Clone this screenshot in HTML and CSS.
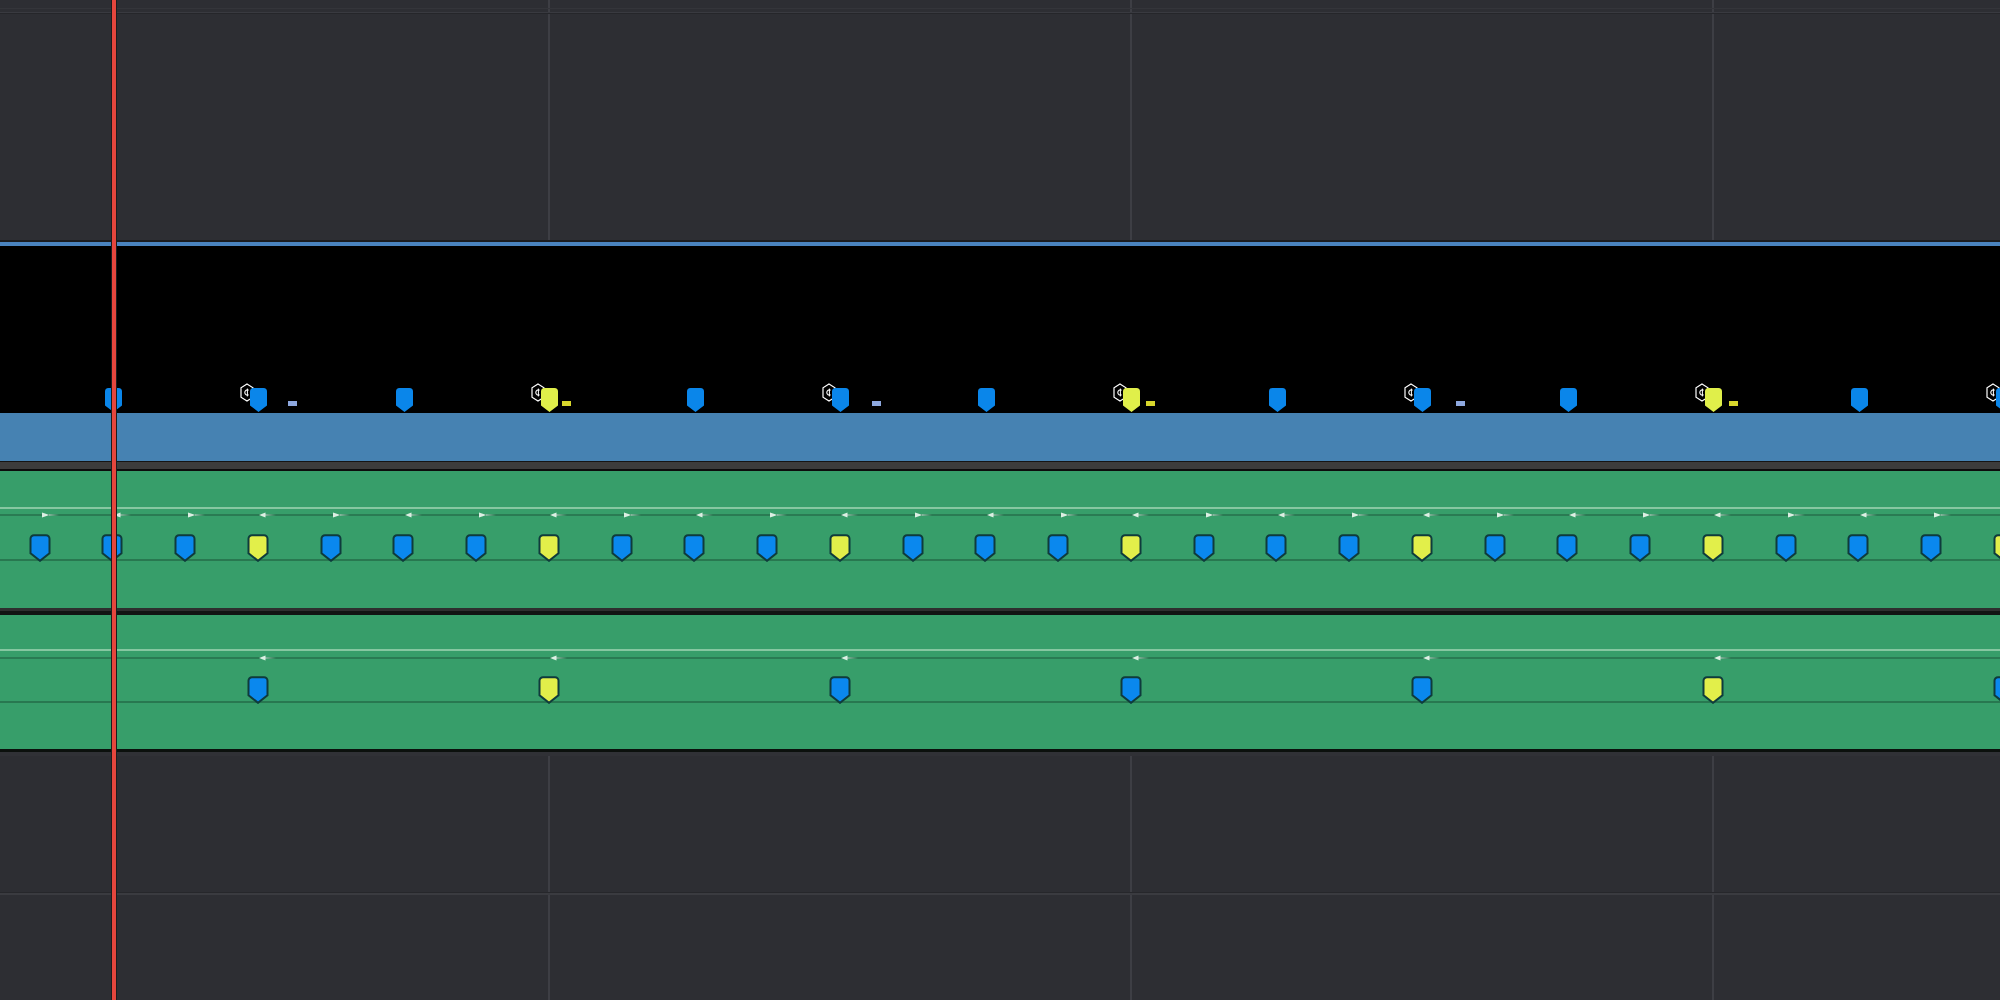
FILE: index.html
```html
<!DOCTYPE html>
<html>
<head>
<meta charset="utf-8">
<title>Timeline</title>
<link rel="stylesheet" href="styles.css">
</head>
<body>
<svg class="defs" width="0" height="0">
  <defs>
    <linearGradient id="fade" x1="0" x2="1" y1="0" y2="0">
      <stop offset="0" stop-color="#dcefe3" stop-opacity="0.85"/>
      <stop offset="1" stop-color="#dcefe3" stop-opacity="0"/>
    </linearGradient>
    <symbol id="pin-blue" viewBox="0 0 22 28"><path d="M5 1.2H17A3.5 3.5 0 0 1 20.5 4.7V19.2L11 26.8 1.5 19.2V4.7A3.5 3.5 0 0 1 5 1.2Z" fill="#0a88ee" stroke="#0f3b3c" stroke-width="2"/></symbol>
    <symbol id="pin-yellow" viewBox="0 0 22 28"><path d="M5 1.2H17A3.5 3.5 0 0 1 20.5 4.7V19.2L11 26.8 1.5 19.2V4.7A3.5 3.5 0 0 1 5 1.2Z" fill="#e2ef4a" stroke="#0f3b3c" stroke-width="2"/></symbol>
    <symbol id="tag-blue" viewBox="0 0 17 24"><path d="M3.5 0H13.5A3.5 3.5 0 0 1 17 3.5V17.5L8.5 24 0 17.5V3.5A3.5 3.5 0 0 1 3.5 0Z" fill="#0a86ea"/></symbol>
    <symbol id="tag-yellow" viewBox="0 0 17 24"><path d="M3.5 0H13.5A3.5 3.5 0 0 1 17 3.5V17.5L8.5 24 0 17.5V3.5A3.5 3.5 0 0 1 3.5 0Z" fill="#e0ef4a"/></symbol>
    <symbol id="hex" viewBox="0 0 14 19"><path d="M7 1L13 4.8V14.2L7 18 1 14.2V4.8Z" fill="none" stroke="#ffffff" stroke-width="1.2"/><path d="M8.6 7.2A2.6 2.6 0 1 0 8.6 11.8" fill="none" stroke="#ffffff" stroke-width="1.1"/><path d="M7.4 5.6V13.4" stroke="#ffffff" stroke-width="1"/></symbol>
    <symbol id="arr-r" viewBox="0 0 17 6"><polygon points="0,0.6 7.5,3 0,5.4" fill="#dcefe3"/><rect x="7" y="2.4" width="10" height="1.2" fill="url(#fade)"/></symbol>
    <symbol id="arr-l" viewBox="0 0 17 6"><polygon points="0,3 6.5,0.6 6.5,5.4" fill="#dcefe3"/><rect x="6" y="2.4" width="11" height="1.2" fill="url(#fade)"/></symbol>
  </defs>
</svg>

<div class="timeline">
  <div class="ruler"></div>
  <div class="lane-rule"></div>

  <div class="sub-lane">
    <div class="tag-row">
      <svg class="tag" style="left:112.25px"><use href="#tag-blue"/></svg>
      <svg class="hex" style="left:257.75px"><use href="#hex"/></svg>
      <svg class="tag" style="left:257.75px"><use href="#tag-blue"/></svg>
      <span class="chip chip-blue" style="left:288px"></span>
      <svg class="tag" style="left:403.25px"><use href="#tag-blue"/></svg>
      <svg class="hex" style="left:548.75px"><use href="#hex"/></svg>
      <svg class="tag" style="left:548.75px"><use href="#tag-yellow"/></svg>
      <span class="chip chip-yellow" style="left:562px"></span>
      <svg class="tag" style="left:694.25px"><use href="#tag-blue"/></svg>
      <svg class="hex" style="left:839.75px"><use href="#hex"/></svg>
      <svg class="tag" style="left:839.75px"><use href="#tag-blue"/></svg>
      <span class="chip chip-blue" style="left:872px"></span>
      <svg class="tag" style="left:985.25px"><use href="#tag-blue"/></svg>
      <svg class="hex" style="left:1130.75px"><use href="#hex"/></svg>
      <svg class="tag" style="left:1130.75px"><use href="#tag-yellow"/></svg>
      <span class="chip chip-yellow" style="left:1146px"></span>
      <svg class="tag" style="left:1276.25px"><use href="#tag-blue"/></svg>
      <svg class="hex" style="left:1421.75px"><use href="#hex"/></svg>
      <svg class="tag" style="left:1421.75px"><use href="#tag-blue"/></svg>
      <span class="chip chip-blue" style="left:1456px"></span>
      <svg class="tag" style="left:1567.25px"><use href="#tag-blue"/></svg>
      <svg class="hex" style="left:1712.75px"><use href="#hex"/></svg>
      <svg class="tag" style="left:1712.75px"><use href="#tag-yellow"/></svg>
      <span class="chip chip-yellow" style="left:1729px"></span>
      <svg class="tag" style="left:1858.25px"><use href="#tag-blue"/></svg>
      <svg class="hex" style="left:2003.75px"><use href="#hex"/></svg>
      <svg class="tag" style="left:2003.75px"><use href="#tag-blue"/></svg>
    </div>
  </div>

  <div class="blue-bar"></div>
  <div class="sep sep-a"></div>

  <div class="track t1">
    <div class="guide"></div>
    <div class="keyrow">
      <svg class="arr arr-right" style="left:39.5px"><use href="#arr-r"/></svg>
      <svg class="arr arr-left" style="left:112.25px"><use href="#arr-l"/></svg>
      <svg class="arr arr-right" style="left:185px"><use href="#arr-r"/></svg>
      <svg class="arr arr-left" style="left:257.75px"><use href="#arr-l"/></svg>
      <svg class="arr arr-right" style="left:330.5px"><use href="#arr-r"/></svg>
      <svg class="arr arr-left" style="left:403.25px"><use href="#arr-l"/></svg>
      <svg class="arr arr-right" style="left:476px"><use href="#arr-r"/></svg>
      <svg class="arr arr-left" style="left:548.75px"><use href="#arr-l"/></svg>
      <svg class="arr arr-right" style="left:621.5px"><use href="#arr-r"/></svg>
      <svg class="arr arr-left" style="left:694.25px"><use href="#arr-l"/></svg>
      <svg class="arr arr-right" style="left:767px"><use href="#arr-r"/></svg>
      <svg class="arr arr-left" style="left:839.75px"><use href="#arr-l"/></svg>
      <svg class="arr arr-right" style="left:912.5px"><use href="#arr-r"/></svg>
      <svg class="arr arr-left" style="left:985.25px"><use href="#arr-l"/></svg>
      <svg class="arr arr-right" style="left:1058px"><use href="#arr-r"/></svg>
      <svg class="arr arr-left" style="left:1130.75px"><use href="#arr-l"/></svg>
      <svg class="arr arr-right" style="left:1203.5px"><use href="#arr-r"/></svg>
      <svg class="arr arr-left" style="left:1276.25px"><use href="#arr-l"/></svg>
      <svg class="arr arr-right" style="left:1349px"><use href="#arr-r"/></svg>
      <svg class="arr arr-left" style="left:1421.75px"><use href="#arr-l"/></svg>
      <svg class="arr arr-right" style="left:1494.5px"><use href="#arr-r"/></svg>
      <svg class="arr arr-left" style="left:1567.25px"><use href="#arr-l"/></svg>
      <svg class="arr arr-right" style="left:1640px"><use href="#arr-r"/></svg>
      <svg class="arr arr-left" style="left:1712.75px"><use href="#arr-l"/></svg>
      <svg class="arr arr-right" style="left:1785.5px"><use href="#arr-r"/></svg>
      <svg class="arr arr-left" style="left:1858.25px"><use href="#arr-l"/></svg>
      <svg class="arr arr-right" style="left:1931px"><use href="#arr-r"/></svg>
      <svg class="arr arr-left" style="left:2003.75px"><use href="#arr-l"/></svg>
    </div>
    <div class="markrow">
      <svg class="pin" style="left:39.5px"><use href="#pin-blue"/></svg>
      <svg class="pin" style="left:112.25px"><use href="#pin-blue"/></svg>
      <svg class="pin" style="left:185px"><use href="#pin-blue"/></svg>
      <svg class="pin" style="left:257.75px"><use href="#pin-yellow"/></svg>
      <svg class="pin" style="left:330.5px"><use href="#pin-blue"/></svg>
      <svg class="pin" style="left:403.25px"><use href="#pin-blue"/></svg>
      <svg class="pin" style="left:476px"><use href="#pin-blue"/></svg>
      <svg class="pin" style="left:548.75px"><use href="#pin-yellow"/></svg>
      <svg class="pin" style="left:621.5px"><use href="#pin-blue"/></svg>
      <svg class="pin" style="left:694.25px"><use href="#pin-blue"/></svg>
      <svg class="pin" style="left:767px"><use href="#pin-blue"/></svg>
      <svg class="pin" style="left:839.75px"><use href="#pin-yellow"/></svg>
      <svg class="pin" style="left:912.5px"><use href="#pin-blue"/></svg>
      <svg class="pin" style="left:985.25px"><use href="#pin-blue"/></svg>
      <svg class="pin" style="left:1058px"><use href="#pin-blue"/></svg>
      <svg class="pin" style="left:1130.75px"><use href="#pin-yellow"/></svg>
      <svg class="pin" style="left:1203.5px"><use href="#pin-blue"/></svg>
      <svg class="pin" style="left:1276.25px"><use href="#pin-blue"/></svg>
      <svg class="pin" style="left:1349px"><use href="#pin-blue"/></svg>
      <svg class="pin" style="left:1421.75px"><use href="#pin-yellow"/></svg>
      <svg class="pin" style="left:1494.5px"><use href="#pin-blue"/></svg>
      <svg class="pin" style="left:1567.25px"><use href="#pin-blue"/></svg>
      <svg class="pin" style="left:1640px"><use href="#pin-blue"/></svg>
      <svg class="pin" style="left:1712.75px"><use href="#pin-yellow"/></svg>
      <svg class="pin" style="left:1785.5px"><use href="#pin-blue"/></svg>
      <svg class="pin" style="left:1858.25px"><use href="#pin-blue"/></svg>
      <svg class="pin" style="left:1931px"><use href="#pin-blue"/></svg>
      <svg class="pin" style="left:2003.75px"><use href="#pin-yellow"/></svg>
    </div>
  </div>

  <div class="sep sep-b"></div>

  <div class="track t2">
    <div class="guide"></div>
    <div class="keyrow">
      <svg class="arr arr-left" style="left:257.75px"><use href="#arr-l"/></svg>
      <svg class="arr arr-left" style="left:548.75px"><use href="#arr-l"/></svg>
      <svg class="arr arr-left" style="left:839.75px"><use href="#arr-l"/></svg>
      <svg class="arr arr-left" style="left:1130.75px"><use href="#arr-l"/></svg>
      <svg class="arr arr-left" style="left:1421.75px"><use href="#arr-l"/></svg>
      <svg class="arr arr-left" style="left:1712.75px"><use href="#arr-l"/></svg>
      <svg class="arr arr-left" style="left:2003.75px"><use href="#arr-l"/></svg>
    </div>
    <div class="markrow">
      <svg class="pin" style="left:257.75px"><use href="#pin-blue"/></svg>
      <svg class="pin" style="left:548.75px"><use href="#pin-yellow"/></svg>
      <svg class="pin" style="left:839.75px"><use href="#pin-blue"/></svg>
      <svg class="pin" style="left:1130.75px"><use href="#pin-blue"/></svg>
      <svg class="pin" style="left:1421.75px"><use href="#pin-blue"/></svg>
      <svg class="pin" style="left:1712.75px"><use href="#pin-yellow"/></svg>
      <svg class="pin" style="left:2003.75px"><use href="#pin-blue"/></svg>
    </div>
  </div>

  <div class="sep sep-c"></div>
  <div class="lower"></div>

  <div class="playhead"></div>
</div>
</body>
</html>
```

FILE: styles.css
```css
html, body {
  margin: 0;
  padding: 0;
}

body {
  width: 2000px;
  height: 1000px;
  overflow: hidden;
  background: #2d2e33;
  font-family: "Liberation Sans", Arial, sans-serif;
}

.defs {
  display: block;
  width: 0;
  height: 0;
  overflow: hidden;
}

.timeline {
  position: relative;
  width: 2000px;
  height: 1000px;
  display: flex;
  flex-direction: column;
  overflow: hidden;
}

/* upper empty ruler area with grid */
.ruler {
  height: 240px;
  flex: none;
  background-color: #2d2e33;
  background-image:
    linear-gradient(to bottom, transparent 8px, #34353a 8px, #34353a 9px, transparent 9px, transparent 12px, #393a40 12px, #393a40 13px, #25262a 13px, #25262a 14px, transparent 14px),
    linear-gradient(90deg, #3d3e44 0, #3d3e44 2px, transparent 2px);
  background-size: 100% 100%, 582px 100%;
  background-position: 0 0, 548px 0;
  background-repeat: no-repeat, repeat-x;
}

.lane-rule {
  height: 4px;
  flex: none;
  border-top: 2px solid #1b1c1f;
  background: #4a83be;
}

/* subtitle / marker lane */
.sub-lane {
  height: 167px;
  flex: none;
  background: #000000;
  display: flex;
  flex-direction: column;
  justify-content: flex-end;
}

.tag-row {
  position: relative;
  height: 30px;
}

.tag {
  position: absolute;
  top: 5px;
  width: 17px;
  height: 24px;
  margin-left: -7.5px;
}

.hex {
  position: absolute;
  top: 0;
  width: 14px;
  height: 19px;
  margin-left: -18px;
}

.chip {
  position: absolute;
  top: 18px;
  width: 9px;
  height: 5px;
}

.chip-blue {
  background: #8ea8df;
}

.chip-yellow {
  background: #d8d62c;
}

.blue-bar {
  height: 48px;
  flex: none;
  background: #4682b2;
}

.sep {
  flex: none;
}

.sep-a {
  height: 7px;
  border-top: 1px solid #151515;
  border-bottom: 2px solid #0c0c0c;
  background: #3c3c3c;
}

.sep-b {
  height: 7px;
  background: linear-gradient(to bottom, #2e2f2f 0, #2e2f2f 3px, #121413 3px);
}

.sep-c {
  height: 3px;
  background: #0b100d;
}

/* green tracks */
.track {
  flex: none;
  display: flex;
  flex-direction: column;
  background: #379e6a;
  box-sizing: border-box;
}

.t1 {
  height: 137px;
  padding-top: 36px;
}

.t2 {
  height: 134px;
  padding-top: 34px;
}

.guide {
  height: 2px;
  background: #86c7a1;
}

.keyrow {
  position: relative;
  height: 12px;
  margin-top: 1px;
  background: linear-gradient(to bottom, transparent 4px, #2a7b53 4px, #2a7b53 6px, transparent 6px);
}

.t2 .keyrow {
  margin-top: 2px;
}

.arr {
  position: absolute;
  top: 2px;
  width: 17px;
  height: 6px;
}

.arr-right {
  margin-left: 2.5px;
}

.arr-left {
  margin-left: 1.5px;
}

.markrow {
  position: relative;
  height: 27px;
  margin-top: 12px;
  background: linear-gradient(to bottom, transparent 25px, #287850 25px, #287850 27px);
}

.t2 .markrow {
  margin-top: 11px;
}

.pin {
  position: absolute;
  top: 0;
  width: 22px;
  height: 28px;
  margin-left: -11px;
}

/* lower empty area */
.lower {
  flex: 1;
  background-color: #2d2e33;
  background-image:
    linear-gradient(to bottom, #303136 0, #303136 4px, transparent 4px, transparent 140px, #26272b 140px, #26272b 141px, #3a3b40 141px, #3a3b40 143px, transparent 143px),
    linear-gradient(90deg, #3d3e44 0, #3d3e44 2px, transparent 2px);
  background-size: 100% 100%, 582px 100%;
  background-position: 0 0, 548px 0;
  background-repeat: no-repeat, repeat-x;
}

/* playhead overlay */
.playhead {
  position: absolute;
  left: 111px;
  top: 0;
  width: 4px;
  height: 1000px;
  background: #e5463d;
  border-left: 1px solid #1d1d1d;
  border-right: 1px solid #1d1d1d;
}
```
